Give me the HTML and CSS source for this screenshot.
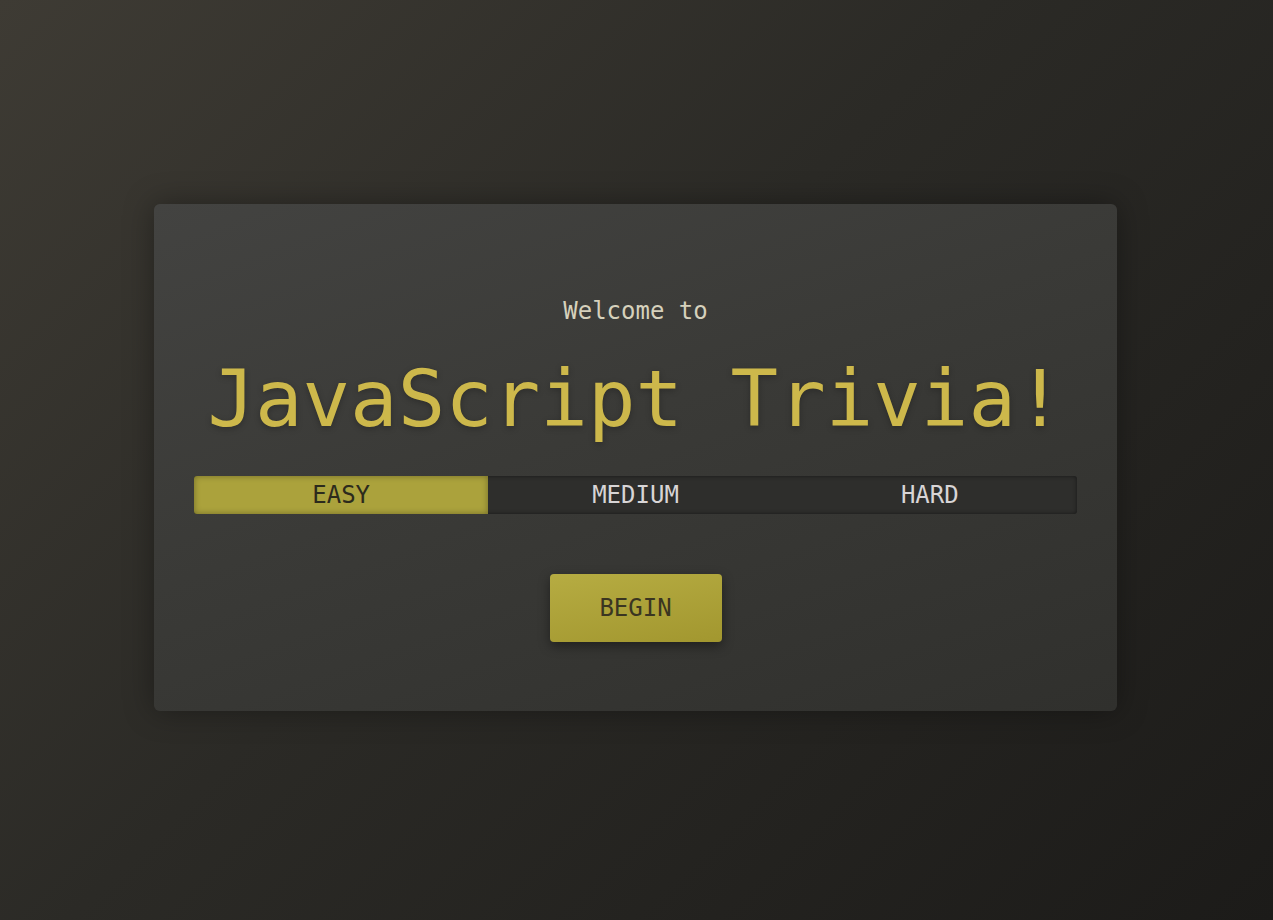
FILE: index.html
```html
<!DOCTYPE html>
<html lang="en">
<head>
<meta charset="utf-8">
<title>JavaScript Trivia</title>
<link rel="stylesheet" href="styles.css">
</head>
<body>
<main class="card">
  <p class="welcome">Welcome to</p>
  <h1 class="title">JavaScript Trivia!</h1>
  <div class="difficulty">
    <button class="level active">EASY</button>
    <button class="level">MEDIUM</button>
    <button class="level">HARD</button>
  </div>
  <div class="actions">
    <button class="begin">BEGIN</button>
  </div>
</main>
</body>
</html>
```
FILE: styles.css
```css
html, body {
  height: 100%;
}
body {
  margin: 0;
  font-family: "DejaVu Sans Mono", "Liberation Mono", monospace;
  background: linear-gradient(135deg, #3e3b34 0%, #2b2a26 45%, #1c1b19 100%);
  display: flex;
  align-items: center;
  justify-content: center;
}
.card {
  width: 963px;
  height: 507px;
  box-sizing: border-box;
  padding: 94px 40px 0;
  border-radius: 6px;
  background: linear-gradient(160deg, #434341 0%, #3a3a37 45%, #30302d 100%);
  box-shadow: 0 0 30px rgba(0, 0, 0, 0.35);
  display: flex;
  flex-direction: column;
  align-items: stretch;
  margin: -5px 2px 0 0;
}
.welcome {
  margin: 0;
  text-align: center;
  font-size: 24px;
  line-height: 26px;
  color: #d6d1bc;
}
.title {
  margin: 27px 0 0;
  text-align: center;
  font-weight: normal;
  font-size: 79px;
  line-height: 96px;
  color: #cdb84b;
  text-shadow: 0 2px 6px rgba(0, 0, 0, 0.25);
}
.difficulty {
  margin-top: 29px;
  display: flex;
  height: 38px;
  border-radius: 3px;
  background: #2e2e2c;
  box-shadow: inset 0 0 4px rgba(0, 0, 0, 0.5);
  overflow: hidden;
}
.level {
  flex: 1;
  border: 0;
  margin: 0;
  padding: 0;
  background: transparent;
  font-family: inherit;
  font-size: 24px;
  color: #d8d5d6;
  cursor: pointer;
}
.level.active {
  background: #aba23c;
  color: #2c2a1c;
  box-shadow: inset 0 0 6px rgba(0, 0, 0, 0.35);
}
.actions {
  margin-top: 60px;
  display: flex;
  justify-content: center;
}
.begin {
  width: 172px;
  height: 68px;
  border: 0;
  border-radius: 4px;
  background: linear-gradient(170deg, #b6ac42 0%, #a2972f 100%);
  color: #3a3521;
  font-family: inherit;
  font-size: 24px;
  box-shadow: 0 4px 12px rgba(0, 0, 0, 0.4);
  cursor: pointer;
}
```
